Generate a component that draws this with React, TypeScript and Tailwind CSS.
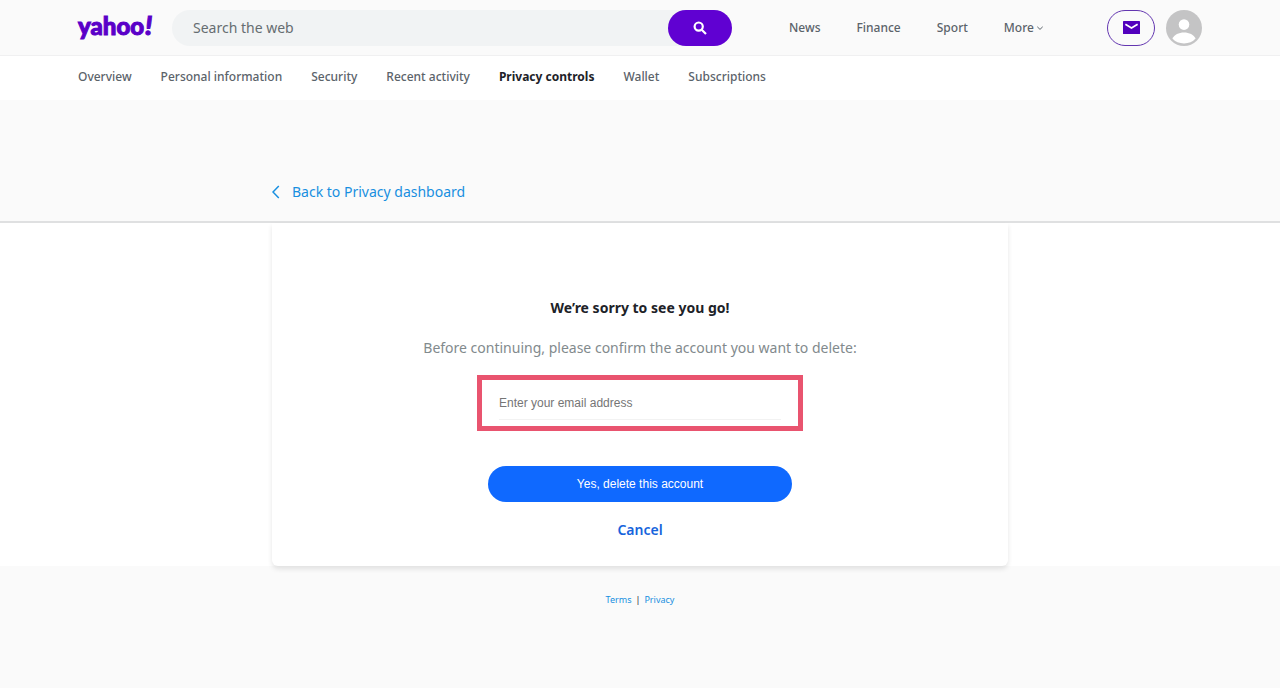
import React from "react";

const topLinks = ["News", "Finance", "Sport"];

const sections = [
  "Overview",
  "Personal information",
  "Security",
  "Recent activity",
  "Privacy controls",
  "Wallet",
  "Subscriptions",
];

function Logo() {
  return (
    <a
      href="#home"
      aria-label="yahoo! home"
      className="flex w-[94px] shrink-0 items-baseline pb-1 font-['Lato',sans-serif] text-2xl leading-8 font-black text-[#5a00c8] [-webkit-text-stroke:1px_#5a00c8]"
    >
      <span>yahoo</span>
      <span className="pl-px text-[27px] italic">!</span>
    </a>
  );
}

function SearchBar() {
  return (
    <form className="flex h-9 w-[560px] rounded-full bg-[#f1f3f4]" onSubmit={(e) => e.preventDefault()}>
      <input
        type="search"
        aria-label="Search the web"
        placeholder="Search the web"
        className="min-w-0 flex-1 bg-transparent pl-[21px] text-sm text-[#5b636a] outline-none placeholder:text-[#666d71]"
      />
      <button
        type="submit"
        aria-label="Search"
        className="flex w-16 items-center justify-center rounded-full bg-[#6001d2] text-white"
      >
        <svg viewBox="0 0 16 16" className="size-4" fill="none" stroke="currentColor" strokeWidth="2.2">
          <circle cx="6.7" cy="6.6" r="4.1" />
          <path d="M9.7 9.7 14 14" />
        </svg>
      </button>
    </form>
  );
}

function TopBar() {
  return (
    <header className="flex h-14 items-center border-b border-[#f0f0f1] bg-[#fafafa] px-[78px]">
      <Logo />
      <SearchBar />
      <nav aria-label="Sites" className="ml-[57px] flex gap-9 text-xs font-medium text-[#5b636a]">
        {topLinks.map((label) => (
          <a key={label} href={`#${label.toLowerCase()}`}>
            {label}
          </a>
        ))}
        <button type="button" className="flex items-center gap-0.5">
          More
          <svg viewBox="0 0 8 8" className="size-2" fill="none" stroke="currentColor" strokeWidth="1">
            <path d="M1.3 2.8 4 5.4l2.7-2.6" />
          </svg>
        </button>
      </nav>
      <div className="ml-auto flex items-center gap-[11px]">
        <a
          href="#mail"
          aria-label="Mail"
          className="flex h-9 w-12 items-center justify-center rounded-full border border-[#6336b0] text-[#5200bd]"
        >
          <svg viewBox="0 0 17 13" className="h-[13px] w-[17px]">
            <rect width="17" height="13" rx=".6" fill="currentColor" />
            <path d="M2.4 3.3 8.5 7l6.1-3.7" fill="none" stroke="white" strokeWidth="1.7" />
          </svg>
        </a>
        <button type="button" aria-label="Account" className="size-9">
          <svg viewBox="0 0 36 36" className="size-full">
            <circle cx="18" cy="18" r="18" fill="#c4c4c5" />
            <circle cx="18" cy="14.6" r="5.3" fill="white" />
            <path d="M6.4 28.6C8.3 24.8 12.7 22.6 18 22.6s9.7 2.2 11.6 6C26.8 32 22.6 33.4 18 33.4S9.2 32 6.4 28.6Z" fill="white" />
          </svg>
        </button>
      </div>
    </header>
  );
}

function SectionNav() {
  return (
    <nav
      aria-label="Account sections"
      className="flex h-11 items-center gap-[29px] bg-white px-[78px] pb-0.5 text-xs font-medium text-[#5b636a]"
    >
      {sections.map((label) =>
        label === "Privacy controls" ? (
          <a key={label} href="#privacy-controls" aria-current="page" className="font-bold text-[#1d2228]">
            {label}
          </a>
        ) : (
          <a key={label} href={`#${label.toLowerCase().replace(" ", "-")}`}>
            {label}
          </a>
        ),
      )}
    </nav>
  );
}

function DeleteCard() {
  return (
    <form
      className="mx-auto flex w-full max-w-[736px] flex-col items-center rounded-b-md bg-white pt-[73px] pb-6 shadow-[0_3px_5px_rgba(0,0,0,0.1)]"
      onSubmit={(e) => e.preventDefault()}
    >
      <h1 className="text-sm leading-6 font-bold text-[#1d2228]">We’re sorry to see you go!</h1>
      <label htmlFor="email" className="mt-4 text-sm leading-6 text-[#828a8d]">
        Before continuing, please confirm the account you want to delete:
      </label>
      <div className="mt-[15px] h-14 w-[326px] border-[5px] border-[#e9546f] px-[17px]">
        <input
          id="email"
          type="email"
          placeholder="Enter your email address"
          className="h-10 w-full border-b border-[#f2f2f2] bg-transparent pt-1.5 font-['Liberation_Sans',sans-serif] text-xs outline-none placeholder:text-[#757575]"
        />
      </div>
      <button
        type="submit"
        className="mt-[35px] h-9 w-[304px] rounded-full bg-[#0f69ff] font-['Liberation_Sans',sans-serif] text-xs text-white"
      >
        Yes, delete this account
      </button>
      <a href="#cancel" className="mt-4 text-sm leading-6 font-semibold text-[#1664dc]">
        Cancel
      </a>
    </form>
  );
}

export default function App() {
  return (
    <div className="min-h-screen bg-[#fafafa] font-['Noto_Sans',sans-serif]">
      <TopBar />
      <SectionNav />
      <div className="border-b-2 border-[#dfe0e1] pt-20 pb-4">
        <div className="mx-auto max-w-[736px]">
          <a href="#dashboard" className="inline-flex items-center gap-3 text-sm leading-6 text-[#188fe0]">
            <svg viewBox="0 0 8 14" className="h-3.5 w-2" fill="none" stroke="currentColor" strokeWidth="1.5">
              <path d="M6.8 1 1 7l5.8 6" />
            </svg>
            Back to Privacy dashboard
          </a>
        </div>
      </div>
      <main className="bg-white">
        <DeleteCard />
      </main>
      <footer className="flex justify-center gap-1 pt-[27px] text-[9px] leading-[14px] text-[#188fe0]">
        <a href="#terms">Terms</a>
        <span className="text-[#1d2228]">|</span>
        <a href="#privacy">Privacy</a>
      </footer>
    </div>
  );
}
